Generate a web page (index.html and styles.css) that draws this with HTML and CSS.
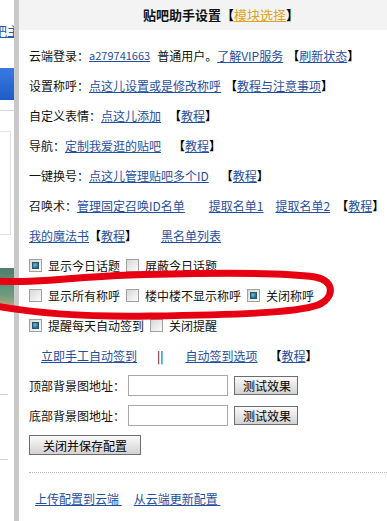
FILE: index.html
```html
<!DOCTYPE html>
<html lang="zh-CN">
<head>
<meta charset="utf-8">
<title>贴吧助手设置</title>
<link rel="stylesheet" href="styles.css">
</head>
<body>
<div class="page">
  <div class="side">
    <div class="side-link"><a href="#">吧主</a></div>
    <div class="side-blue"></div>
    <div class="side-line"></div>
    <div class="side-box"></div>
    <div class="side-green"></div>
    <div class="side-dash d1"></div>
    <div class="side-dash d2"></div>
  </div>
  <div class="bar"></div>
  <div class="panel">
    <div class="head"><b>贴吧助手设置</b><span class="br">【</span><a class="mod" href="#">模块选择</a><span class="br">】</span></div>
    <div class="body">
      <div class="row">云端登录：<a class="acct" href="#">a279741663</a><span class="ml7">普通用户。</span><a href="#">了解VIP服务</a><span class="br ml4">【</span><a href="#">刷新状态</a><span class="br">】</span></div>
      <div class="row">设置称呼：<a href="#">点这儿设置或是修改称呼</a><span class="br ml4">【</span><a href="#">教程与注意事项</a><span class="br">】</span></div>
      <div class="row">自定义表情：<a href="#">点这儿添加</a><span class="br ml8">【</span><a href="#">教程</a><span class="br">】</span></div>
      <div class="row">导航：<a href="#">定制我爱逛的贴吧</a><span class="br ml12">【</span><a href="#">教程</a><span class="br">】</span></div>
      <div class="row">一键换号：<a href="#">点这儿管理贴吧多个ID</a><span class="br ml12">【</span><a href="#">教程</a><span class="br">】</span></div>
      <div class="row">召唤术：<a href="#">管理固定召唤ID名单</a><a class="ml24" href="#">提取名单1</a><a class="ml12" href="#">提取名单2</a><span class="br ml6">【</span><a href="#">教程</a><span class="br">】</span></div>
      <div class="row"><a href="#">我的魔法书</a><span class="br">【</span><a href="#">教程</a><span class="br">】</span><a class="ml24" href="#">黑名单列表</a></div>
      <div class="row">
        <span class="cb on"></span><span class="lbl">显示今日话题</span>
        <span class="cb"></span><span class="lbl">屏蔽今日话题</span>
      </div>
      <div class="row">
        <span class="cb"></span><span class="lbl">显示所有称呼</span>
        <span class="cb"></span><span class="lbl">楼中楼不显示称呼</span>
        <span class="cb on"></span><span class="lbl">关闭称呼</span>
      </div>
      <div class="row">
        <span class="cb on"></span><span class="lbl">提醒每天自动签到</span>
        <span class="cb"></span><span class="lbl">关闭提醒</span>
      </div>
      <div class="row indent"><a href="#">立即手工自动签到</a><span class="sep">||</span><a href="#">自动签到选项</a><span class="br ml12">【</span><a href="#">教程</a><span class="br">】</span></div>
      <div class="row">顶部背景图地址：<input class="txt" type="text"><button class="btn">测试效果</button></div>
      <div class="row">底部背景图地址：<input class="txt" type="text"><button class="btn">测试效果</button></div>
      <div class="row"><button class="btn save">关闭并保存配置</button></div>
      <div class="dots"></div>
      <div class="row foot"><a href="#">上传配置到云端&nbsp;</a><a class="ml12" href="#">从云端更新配置&nbsp;</a></div>
    </div>
  </div>
  <svg class="mark" width="387" height="521" viewBox="0 0 387 521">
    <path d="M -4 281 C 30 284, 70 277, 130 275 C 200 273, 280 272, 315 277 C 336 281, 334 298, 318 305 C 296 313, 230 315, 150 316 C 90 317, 40 314, -4 306" fill="none" stroke="#e60012" stroke-width="7" stroke-linecap="round"/>
  </svg>
</div>
</body>
</html>
```
FILE: styles.css
```css
html, body {
  margin: 0;
  padding: 0;
  background: #fff;
}
body {
  font-family: "Noto Sans CJK SC", "Liberation Sans", sans-serif;
  font-size: 12px;
  color: #111;
}
.page {
  position: relative;
  display: flex;
  width: 387px;
  height: 521px;
  overflow: hidden;
}
.side {
  position: relative;
  width: 14px;
  flex: none;
  overflow: hidden;
  background: #fff;
}
.side-link {
  margin-top: 23px;
  height: 16px;
  line-height: 16px;
  white-space: nowrap;
  margin-left: -6px;
}
.side-link a {
  color: #2a5aa8;
  font-size: 13px;
}
.side-blue {
  margin-top: 29px;
  height: 32px;
  background: linear-gradient(#3a7ae0, #1d5cc8);
}
.side-line {
  margin-top: 10px;
  height: 1px;
  background: #d8d8d8;
}
.side-box {
  margin-top: 20px;
  width: 10px;
  height: 102px;
  border-top: 1px solid #e2e2e2;
  border-right: 1px solid #e2e2e2;
  border-bottom: 1px solid #e2e2e2;
}
.side-green {
  margin-top: 33px;
  height: 38px;
  background: linear-gradient(#4f7f6a, #6a9a80 70%, #b9a67a);
}
.side-dash {
  height: 1px;
  width: 8px;
  background: #cfcfcf;
}
.d1 { margin-top: 88px; }
.d2 { margin-top: 64px; }
.bar {
  width: 5px;
  flex: none;
  background: #c9c9c9;
}
.panel {
  flex: 1;
  min-width: 0;
}
.head {
  height: 30px;
  line-height: 30px;
  background: #f3f3f3;
  padding-left: 124px;
  white-space: nowrap;
  font-size: 13px;
}
.head b {
  font-weight: bold;
}
.br {
  font-weight: bold;
  color: #000;
}
.mod {
  color: #e0a31c;
  text-decoration: underline;
}
.body {
  padding: 10px 0 0 10px;
}
.row {
  height: 30px;
  display: flex;
  align-items: center;
  white-space: nowrap;
}
a {
  color: #1f4f9e;
  text-decoration: underline;
}
.acct {
  font-size: 11px;
}
.ml4 { margin-left: 4px; }
.ml6 { margin-left: 6px; }
.ml7 { margin-left: 7px; }
.ml8 { margin-left: 8px; }
.ml12 { margin-left: 12px; }
.ml24 { margin-left: 24px; }
.cb {
  width: 11px;
  height: 11px;
  border: 1px solid #a0a0a0;
  background: linear-gradient(135deg, #d8d8d8, #fbfbfb);
  margin-right: 6px;
  flex: none;
  display: flex;
  align-items: center;
  justify-content: center;
}
.cb.on::after {
  content: "";
  width: 5px;
  height: 5px;
  background: radial-gradient(circle at 40% 40%, #6cc0e0, #22607f 80%);
  border: 1px solid #2a5570;
}
.lbl {
  margin-right: 6px;
}
.indent {
  padding-left: 12px;
}
.sep {
  margin: 0 22px 0 20px;
  color: #000;
}
.txt {
  width: 98px;
  height: 19px;
  border: 1px solid #a8a8a8;
  padding: 0;
  margin: 0 0 0 3px;
  box-sizing: content-box;
  background: #fff;
}
.btn {
  font-family: "Noto Sans CJK SC", "Liberation Sans", sans-serif;
  font-size: 12px;
  color: #000;
  height: 19px;
  line-height: 15px;
  padding: 0 8px;
  border: 1px solid #6e6e6e;
  border-radius: 0;
  background: linear-gradient(#fafafa, #e2e2e2 60%, #d2d2d2);
  margin-left: 6px;
  width: 64px;
}
.save {
  margin-left: 0;
  width: 112px;
  height: 20px;
}
.dots {
  margin-top: 12px;
  border-top: 1px dotted #b8b8b8;
}
.foot {
  margin-top: 10px;
  padding-left: 6px;
}
.mark {
  position: absolute;
  left: 0;
  top: 0;
  pointer-events: none;
}
```
